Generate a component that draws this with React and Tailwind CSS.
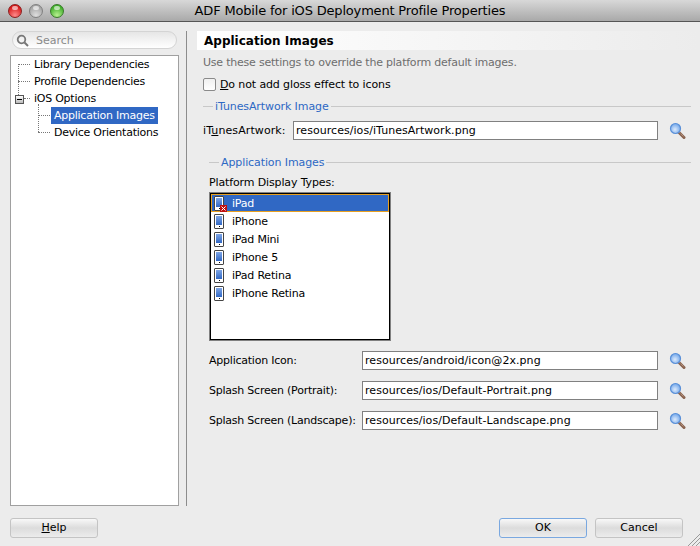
const font = { fontFamily: '"DejaVu Sans", sans-serif' };

function Traffic({ bg, border }) {
  return (
    <span className={`relative w-[14px] h-[14px] rounded-full border ${border} ${bg}`}>
      <span className="absolute left-[3px] top-[1px] w-[6px] h-[4px] rounded-full bg-white/60" />
    </span>
  );
}

function Magnifier({ className = "" }) {
  return (
    <svg width="17" height="18" viewBox="0 0 17 18" className={className}>
      <defs>
        <radialGradient id="lens" cx="45%" cy="60%" r="60%">
          <stop offset="0%" stopColor="#dceafc" />
          <stop offset="100%" stopColor="#6fa5ea" />
        </radialGradient>
      </defs>
      <path d="M10 10.5 L15 15.5" stroke="#8a6552" strokeWidth="3" strokeLinecap="round" />
      <path d="M10.5 10.5 L15 15" stroke="#c9a590" strokeWidth="1" strokeDasharray="1 1" />
      <circle cx="6.5" cy="6.5" r="5" fill="url(#lens)" stroke="#5a90d8" strokeWidth="1.2" />
    </svg>
  );
}

function Device({ error }) {
  return (
    <span className="relative shrink-0 w-[10px] h-[15px] rounded-[1px] border border-[#444] bg-white flex flex-col items-center">
      <span className="mt-[1px] w-[6px] h-[9px] bg-gradient-to-b from-[#7fa6e6] to-[#2f67c4]" />
      <span className="mt-[1px] w-[1px] h-[1px] bg-black" />
      {error && (
        <span className="absolute -right-[4px] bottom-[-2px] w-[7px] h-[7px] bg-[#c01010] flex items-center justify-center">
          <svg width="5" height="5" viewBox="0 0 5 5"><path d="M0.5 0.5 L4.5 4.5 M4.5 0.5 L0.5 4.5" stroke="#fff" strokeWidth="1" /></svg>
        </span>
      )}
    </span>
  );
}

function Field({ value, w }) {
  return (
    <div className={`h-[19px] ${w} bg-white border border-[#808080] pl-[2px] text-[11px] leading-[17px] tracking-[0.05px] text-black overflow-hidden whitespace-nowrap`}>
      {value}
    </div>
  );
}

function Group({ label, className }) {
  return (
    <div className={`flex items-center h-[14px] ${className}`}>
      <span className="w-[10px] h-px bg-[#c8c8c8]" />
      <span className="px-[2px] pt-[2px] text-[11px] tracking-[-0.1px] text-[#2d68c4] whitespace-nowrap">{label}</span>
      <span className="flex-1 h-px bg-[#c8c8c8]" />
    </div>
  );
}

function Btn({ children, className = "" }) {
  return (
    <div className={`w-[88px] h-[20px] rounded-[3px] border flex items-center justify-center text-[11px] text-black bg-gradient-to-b from-[#f8f8f8] via-[#dcdcdc] to-[#ececec] ${className}`}>
      {children}
    </div>
  );
}

function TreeRow({ children, indent, selected }) {
  return (
    <div className={`flex h-[17px] items-center ${indent}`}>
      <span className={`px-[3px] h-[17px] text-[11px] leading-[17px] tracking-[-0.25px] whitespace-nowrap ${selected ? "bg-[#3068c4] text-white" : "text-black"}`}>{children}</span>
    </div>
  );
}

const devices = ["iPad", "iPhone", "iPad Mini", "iPhone 5", "iPad Retina", "iPhone Retina"];
const images = [
  ["Application Icon:", "resources/android/icon@2x.png"],
  ["Splash Screen (Portrait):", "resources/ios/Default-Portrait.png"],
  ["Splash Screen (Landscape):", "resources/ios/Default-Landscape.png"],
];

export default function App() {
  return (
    <div style={font} className="relative w-[700px] h-[546px] overflow-hidden bg-[#ececec] flex flex-col">
      <div className="h-[22px] shrink-0 flex items-center bg-gradient-to-b from-[#d8d8d8] to-[#a9a9a9] border-b border-[#555]">
        <div className="flex items-center gap-[7px] pl-[8px]">
          <Traffic bg="bg-[radial-gradient(circle_at_50%_85%,#ff8a8a,#d81818_75%)]" border="border-[#8a2020]" />
          <Traffic bg="bg-[radial-gradient(circle_at_50%_85%,#dedede,#a4a4a4_75%)]" border="border-[#808080]" />
          <Traffic bg="bg-[radial-gradient(circle_at_50%_85%,#b8f090,#3fae2a_75%)]" border="border-[#3a7a2a]" />
        </div>
        <div className="flex-1 text-center text-[13px] tracking-[-0.18px] text-black pr-[64px] whitespace-nowrap">ADF Mobile for iOS Deployment Profile Properties</div>
      </div>

      <div className="flex flex-1 pt-[9px] pl-[10px]">
        <div className="w-[169px] shrink-0 flex flex-col">
          <div className="h-[18px] mx-[2px] rounded-full border border-[#d4d4d4] bg-gradient-to-b from-[#e6e6e6] to-white flex items-center pl-[3px] gap-[7px]">
            <svg width="13" height="13" viewBox="0 0 13 13"><circle cx="5.5" cy="5.5" r="3.8" fill="none" stroke="#777" strokeWidth="1.8" /><path d="M8.5 8.5 L12 12" stroke="#777" strokeWidth="2" /></svg>
            <span className="text-[11px] leading-[15px] pt-[1px] text-[#8a8a8a]">Search</span>
          </div>
          <div className="relative mt-[6px] h-[451px] bg-white border border-[#a0a0a0]">
            <TreeRow indent="pl-[20px]">Library Dependencies</TreeRow>
            <TreeRow indent="pl-[20px]">Profile Dependencies</TreeRow>
            <TreeRow indent="pl-[20px]">iOS Options</TreeRow>
            <TreeRow indent="pl-[40px]" selected>Application Images</TreeRow>
            <TreeRow indent="pl-[40px]">Device Orientations</TreeRow>
            <span className="absolute left-[7px] top-[8px] h-[31px] border-l border-dotted border-[#777]" />
            <span className="absolute left-[7px] top-[8px] w-[12px] border-t border-dotted border-[#777]" />
            <span className="absolute left-[7px] top-[25px] w-[12px] border-t border-dotted border-[#777]" />
            <span className="absolute left-[13px] top-[42px] w-[6px] border-t border-dotted border-[#777]" />
            <span className="absolute left-[27px] top-[48px] h-[28px] border-l border-dotted border-[#777]" />
            <span className="absolute left-[27px] top-[59px] w-[12px] border-t border-dotted border-[#777]" />
            <span className="absolute left-[27px] top-[76px] w-[12px] border-t border-dotted border-[#777]" />
            <span className="absolute left-[4px] top-[39px] w-[9px] h-[9px] border border-[#555] bg-gradient-to-b from-white to-[#bbb] flex items-center justify-center">
              <span className="w-[5px] h-px bg-black" />
            </span>
          </div>
        </div>

        <div className="ml-[7px] w-px h-[475px] bg-[#8c8c8c] shrink-0" />

        <div className="ml-[10px] flex-1 flex flex-col">
          <div className="h-[19px] w-[503px] pl-[7px] flex items-center text-[12px] font-bold text-black bg-gradient-to-r from-white to-[#ececec] whitespace-nowrap">Application Images</div>
          <div className="mt-[5px] pl-[6px] h-[15px] leading-[15px] text-[11px] tracking-[-0.22px] text-[#6e6e6e] whitespace-nowrap">Use these settings to override the platform default images.</div>
          <div className="mt-[7px] pl-[6px] flex items-center gap-[4px] h-[15px]">
            <span className="w-[13px] h-[13px] rounded-[2px] border border-[#8a8a8a] bg-gradient-to-b from-[#f0f0f0] to-white" />
            <span className="pt-[1px] text-[11px] tracking-[-0.12px] text-black whitespace-nowrap"><span className="underline">D</span>o not add gloss effect to icons</span>
          </div>
          <Group label="iTunesArtwork Image" className="mt-[7px] ml-[6px] w-[488px]" />
          <div className="mt-[8px] flex items-center pl-[6px] h-[19px]">
            <span className="w-[90px] pt-[1px] text-[11px] tracking-[0.1px] text-black whitespace-nowrap">iT<span className="underline">u</span>nesArtwork:</span>
            <Field value="resources/ios/iTunesArtwork.png" w="w-[365px]" />
            <Magnifier className="ml-[11px]" />
          </div>
          <Group label="Application Images" className="mt-[15px] ml-[12px] w-[482px]" />
          <div className="mt-[6px] pl-[12px] h-[15px] leading-[15px] text-[11px] tracking-[-0.13px] text-black">Platform Display Types:</div>
          <div className="mt-[2px] ml-[12px] w-[182px] h-[149px] border border-[#808080]">
            <div className="h-full border border-black bg-white">
              {devices.map((d, i) => (
                <div key={d} className={`h-[18px] flex items-center gap-[8px] pl-[2px] border text-[11px] tracking-[-0.2px] whitespace-nowrap ${i === 0 ? "bg-[#3068c4] text-white border-[#e8a020]" : "text-black border-transparent"}`}>
                  <Device error={i === 0} />
                  <span className="pt-[2px]">{d}</span>
                </div>
              ))}
            </div>
          </div>
          <div className="mt-[10px] flex flex-col gap-[11px]">
            {images.map(([l, v]) => (
              <div key={l} className="flex items-center h-[19px] pl-[12px]">
                <span className="w-[153px] pt-[2px] text-[11px] tracking-[-0.23px] text-black whitespace-nowrap">{l}</span>
                <Field value={v} w="w-[296px]" />
                <Magnifier className="ml-[11px]" />
              </div>
            ))}
          </div>
        </div>
      </div>

      <div className="h-[28px] shrink-0 pb-[8px] px-[10px] flex items-start">
        <Btn className="border-[#c4c4c4]"><span><span className="underline">H</span>elp</span></Btn>
        <Btn className="ml-auto border-[#7aa8e0]">OK</Btn>
        <Btn className="ml-[8px] mr-[7px] border-[#c4c4c4]">Cancel</Btn>
      </div>

      <svg width="12" height="12" viewBox="0 0 12 12" className="absolute right-0 bottom-0">
        <path d="M0 12 L12 0 M4 12 L12 4 M8 12 L12 8" stroke="#9a9a9a" strokeWidth="1" />
      </svg>
    </div>
  );
}
